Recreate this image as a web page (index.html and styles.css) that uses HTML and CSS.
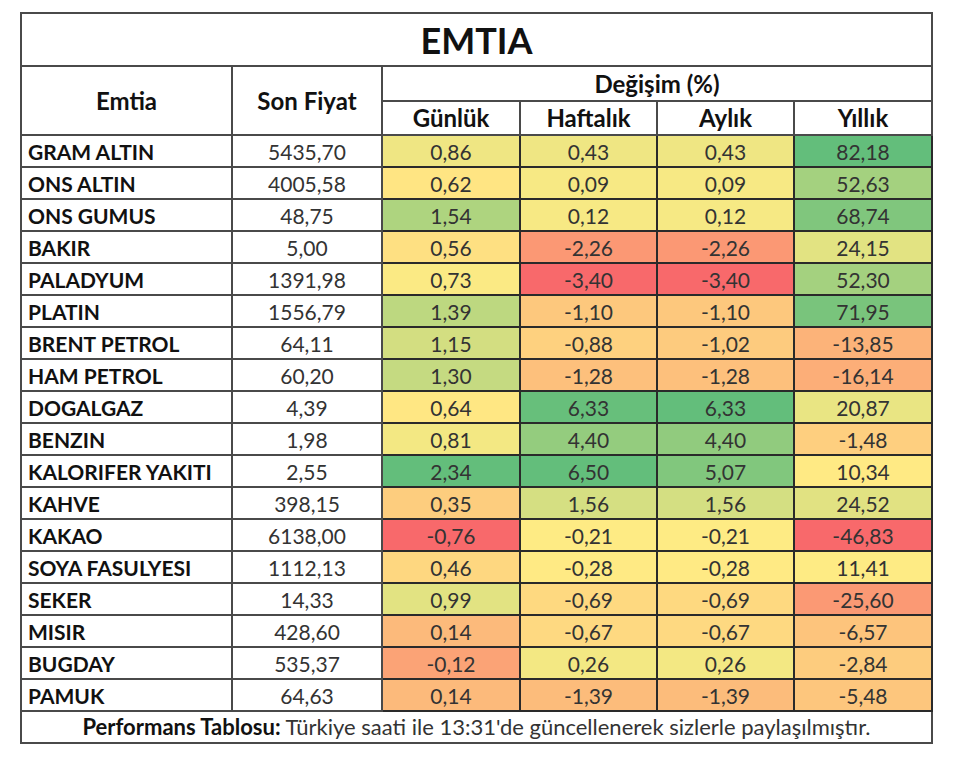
FILE: index.html
```html
<!DOCTYPE html>
<html lang="tr">
<head>
<meta charset="utf-8">
<title>EMTIA</title>
<link rel="stylesheet" href="styles.css">
</head>
<body>
<table class="board" id="board">
  <colgroup>
    <col class="c-name"><col class="c-price"><col class="c-d"><col class="c-w"><col class="c-m"><col class="c-y">
  </colgroup>
  <thead>
    <tr class="r-title"><th colspan="6" class="title">EMTIA</th></tr>
    <tr class="r-group">
      <th rowspan="2" class="head">Emtia</th>
      <th rowspan="2" class="head">Son Fiyat</th>
      <th colspan="4" class="head">Değişim (%)</th>
    </tr>
    <tr class="r-sub">
      <th class="head">Günlük</th><th class="head">Haftalık</th><th class="head">Aylık</th><th class="head">Yıllık</th>
    </tr>
  </thead>
  <tbody>
    <tr><td class="name">GRAM ALTIN</td><td class="num">5435,70</td><td class="chg">0,86</td><td class="chg">0,43</td><td class="chg">0,43</td><td class="chg">82,18</td></tr>
    <tr><td class="name">ONS ALTIN</td><td class="num">4005,58</td><td class="chg">0,62</td><td class="chg">0,09</td><td class="chg">0,09</td><td class="chg">52,63</td></tr>
    <tr><td class="name">ONS GUMUS</td><td class="num">48,75</td><td class="chg">1,54</td><td class="chg">0,12</td><td class="chg">0,12</td><td class="chg">68,74</td></tr>
    <tr><td class="name">BAKIR</td><td class="num">5,00</td><td class="chg">0,56</td><td class="chg">-2,26</td><td class="chg">-2,26</td><td class="chg">24,15</td></tr>
    <tr><td class="name">PALADYUM</td><td class="num">1391,98</td><td class="chg">0,73</td><td class="chg">-3,40</td><td class="chg">-3,40</td><td class="chg">52,30</td></tr>
    <tr><td class="name">PLATIN</td><td class="num">1556,79</td><td class="chg">1,39</td><td class="chg">-1,10</td><td class="chg">-1,10</td><td class="chg">71,95</td></tr>
    <tr><td class="name">BRENT PETROL</td><td class="num">64,11</td><td class="chg">1,15</td><td class="chg">-0,88</td><td class="chg">-1,02</td><td class="chg">-13,85</td></tr>
    <tr><td class="name">HAM PETROL</td><td class="num">60,20</td><td class="chg">1,30</td><td class="chg">-1,28</td><td class="chg">-1,28</td><td class="chg">-16,14</td></tr>
    <tr><td class="name">DOGALGAZ</td><td class="num">4,39</td><td class="chg">0,64</td><td class="chg">6,33</td><td class="chg">6,33</td><td class="chg">20,87</td></tr>
    <tr><td class="name">BENZIN</td><td class="num">1,98</td><td class="chg">0,81</td><td class="chg">4,40</td><td class="chg">4,40</td><td class="chg">-1,48</td></tr>
    <tr><td class="name">KALORIFER YAKITI</td><td class="num">2,55</td><td class="chg">2,34</td><td class="chg">6,50</td><td class="chg">5,07</td><td class="chg">10,34</td></tr>
    <tr><td class="name">KAHVE</td><td class="num">398,15</td><td class="chg">0,35</td><td class="chg">1,56</td><td class="chg">1,56</td><td class="chg">24,52</td></tr>
    <tr><td class="name">KAKAO</td><td class="num">6138,00</td><td class="chg">-0,76</td><td class="chg">-0,21</td><td class="chg">-0,21</td><td class="chg">-46,83</td></tr>
    <tr><td class="name">SOYA FASULYESI</td><td class="num">1112,13</td><td class="chg">0,46</td><td class="chg">-0,28</td><td class="chg">-0,28</td><td class="chg">11,41</td></tr>
    <tr><td class="name">SEKER</td><td class="num">14,33</td><td class="chg">0,99</td><td class="chg">-0,69</td><td class="chg">-0,69</td><td class="chg">-25,60</td></tr>
    <tr><td class="name">MISIR</td><td class="num">428,60</td><td class="chg">0,14</td><td class="chg">-0,67</td><td class="chg">-0,67</td><td class="chg">-6,57</td></tr>
    <tr><td class="name">BUGDAY</td><td class="num">535,37</td><td class="chg">-0,12</td><td class="chg">0,26</td><td class="chg">0,26</td><td class="chg">-2,84</td></tr>
    <tr><td class="name">PAMUK</td><td class="num">64,63</td><td class="chg">0,14</td><td class="chg">-1,39</td><td class="chg">-1,39</td><td class="chg">-5,48</td></tr>
  </tbody>
  <tfoot>
    <tr><td colspan="6" class="foot"><b>Performans Tablosu:</b> Türkiye saati ile 13:31'de güncellenerek sizlerle paylaşılmıştır.</td></tr>
  </tfoot>
</table>
<script src="script.js"></script>
</body>
</html>
```
FILE: styles.css
```css
html, body {
  margin: 0;
  padding: 0;
  background: #ffffff;
}
body {
  padding: 12px 0 0 20px;
  font-family: Lato, "Open Sans", sans-serif;
  color: #222;
}
.board {
  border-collapse: collapse;
  table-layout: fixed;
  width: 912px;
  border: 2px solid #555;
}
.c-name { width: 211px; }
.c-price { width: 150px; }
.c-d { width: 138px; }
.c-w { width: 137px; }
.c-m { width: 137px; }
.c-y { width: 138px; }

.board th, .board td {
  border: 2px solid #4a4a4a;
  padding: 0;
  text-align: center;
  vertical-align: middle;
  white-space: nowrap;
  line-height: 1;
}
.title {
  height: 51px;
  font-size: 36px;
  font-weight: 700;
  color: #111;
  padding-top: 3px;
}
.r-group th { height: 33px; }
.r-sub th { height: 32px; }
.head {
  font-size: 24px;
  font-weight: 700;
  color: #111;
}
tbody td {
  height: 30px;
  font-size: 21px;
}
.name {
  text-align: left !important;
  padding-left: 6px !important;
  font-weight: 700;
  color: #111;
}
.num, .chg {
  color: #333;
}
.chg {
  border-color: #2a2a2a !important;
}
.foot {
  height: 30px;
  font-size: 22px;
  color: #333;
}
.foot b {
  color: #111;
}
```
FILE: script.js
```js
(function () {
  var RED = [248, 105, 107], YEL = [255, 235, 132], GRN = [99, 190, 123];
  var rows = document.querySelectorAll('#board tbody tr');
  function mix(a, b, t) {
    return 'rgb(' + a.map(function (x, i) { return Math.round(x + (b[i] - x) * t); }).join(',') + ')';
  }
  for (var c = 0; c < 4; c++) {
    var cells = [], vals = [];
    rows.forEach(function (r) {
      var td = r.querySelectorAll('.chg')[c];
      cells.push(td);
      vals.push(parseFloat(td.textContent.replace(',', '.')));
    });
    var s = vals.slice().sort(function (a, b) { return a - b; });
    var min = s[0], max = s[s.length - 1];
    var n = s.length, mid = n % 2 ? s[(n - 1) / 2] : (s[n / 2 - 1] + s[n / 2]) / 2;
    cells.forEach(function (td, i) {
      var v = vals[i];
      td.style.backgroundColor = v <= mid
        ? mix(RED, YEL, (v - min) / (mid - min))
        : mix(YEL, GRN, (v - mid) / (max - mid));
    });
  }
})();
```
